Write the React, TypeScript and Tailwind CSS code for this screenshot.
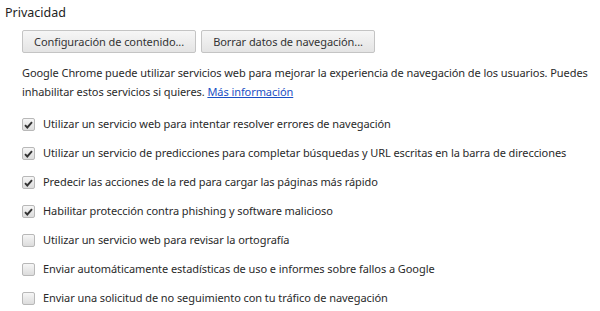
import React from 'react';

const options = [
  { label: 'Utilizar un servicio web para intentar resolver errores de navegación', checked: true },
  { label: 'Utilizar un servicio de predicciones para completar búsquedas y URL escritas en la barra de direcciones', checked: true },
  { label: 'Predecir las acciones de la red para cargar las páginas más rápido', checked: true },
  { label: 'Habilitar protección contra phishing y software malicioso', checked: true },
  { label: 'Utilizar un servicio web para revisar la ortografía', checked: false },
  { label: 'Enviar automáticamente estadísticas de uso e informes sobre fallos a Google', checked: false },
  { label: 'Enviar una solicitud de no seguimiento con tu tráfico de navegación', checked: false },
];

const Checkbox = ({ checked }: { checked: boolean }) => (
  <span className="w-[13px] h-[13px] shrink-0 rounded-[2px] border border-[#b8b8b8] bg-gradient-to-b from-[#f6f6f6] to-[#dcdcdc] flex items-center justify-center">
    {checked && (
      <svg width="9" height="8" viewBox="0 0 9 8">
        <path d="M1 4.2 L3.3 6.5 L8 1.2" fill="none" stroke="#333" strokeWidth="1.9" />
      </svg>
    )}
  </span>
);

export default function App() {
  return (
    <div className="w-[600px] h-[311px] bg-white text-[#2a2a2a] overflow-hidden font-['Noto_Sans',sans-serif] text-[11px] tracking-[-0.07px]">
      <h2 className="pl-[5px] pt-[4px] text-[12.5px] tracking-normal leading-[18px] text-[#222]">Privacidad</h2>

      <div className="pl-[22px]">
        <div className="flex gap-[5px] mt-[8px]">
          <button className="h-[23px] px-[11px] rounded-[2px] border border-[#c4c4c4] bg-gradient-to-b from-[#f6f6f6] to-[#e4e4e4] text-[#333] leading-none">
            Configuración de contenido...
          </button>
          <button className="h-[23px] px-[11px] rounded-[2px] border border-[#c4c4c4] bg-gradient-to-b from-[#f6f6f6] to-[#e4e4e4] text-[#333] leading-none">
            Borrar datos de navegación...
          </button>
        </div>

        <p className="mt-[10px] leading-[19px] pr-[6px]">
          Google Chrome puede utilizar servicios web para mejorar la experiencia de navegación de los usuarios. Puedes inhabilitar estos servicios si quieres.{' '}
          <a className="text-[#1a4fc4] underline">Más información</a>
        </p>

        <div className="mt-[9px] flex flex-col">
          {options.map((o, i) => (
            <label key={i} className="flex items-center gap-[8px] h-[29px]">
              <Checkbox checked={o.checked} />
              <span className="whitespace-nowrap">{o.label}</span>
            </label>
          ))}
        </div>
      </div>
    </div>
  );
}
